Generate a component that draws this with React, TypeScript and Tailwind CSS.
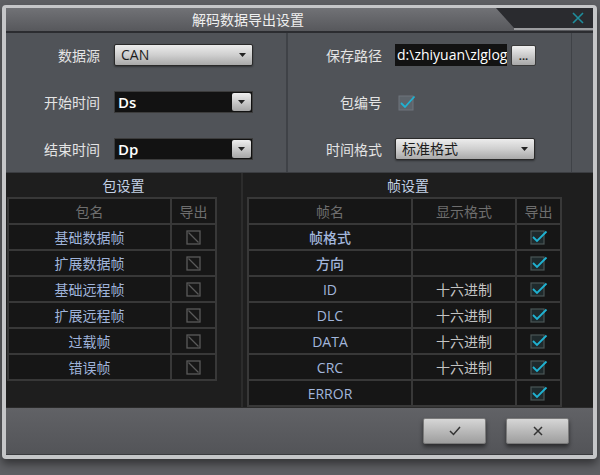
import React from "react";

// 下拉箭头
function Caret() {
  return (
    <svg width="7" height="4" viewBox="0 0 7 4">
      <polygon points="0,0 7,0 3.5,4" fill="#222" />
    </svg>
  );
}

function LightSelect({ value, width }: { value: string; width: string }) {
  return (
    <div
      className={`${width} h-[22px] flex items-center justify-between pl-[6px] pr-[6px] rounded-[2px] border border-[#2a2a2a] bg-gradient-to-b from-[#ececec] via-[#cfcfcf] to-[#a9a9a9] text-[#1c1c1c] text-[14px] shadow-[0_1px_2px_rgba(0,0,0,0.4)]`}
    >
      <span className="leading-none">{value}</span>
      <Caret />
    </div>
  );
}

function DarkSelect({ value }: { value: string }) {
  return (
    <div className="w-[139px] h-[22px] flex items-center justify-between pl-[3px] pr-[1px] border border-[#3c3c3c] bg-[#121212] text-white text-[15px] font-semibold">
      <span className="leading-none">{value}</span>
      <div className="w-[19px] h-[18px] flex items-center justify-center rounded-[2px] bg-gradient-to-b from-[#efefef] to-[#a6a6a6]">
        <Caret />
      </div>
    </div>
  );
}

function CheckOn() {
  return (
    <svg width="18" height="16" viewBox="0 0 18 16">
      <rect x="1" y="2" width="13" height="13" fill="#1f2a2c" stroke="#4a5656" strokeWidth="1.2" />
      <polyline points="3,8 7,12 16.5,2.5" fill="none" stroke="#1fb2d2" strokeWidth="1.8" />
    </svg>
  );
}

function CheckOff() {
  return (
    <svg width="15" height="15" viewBox="0 0 15 15">
      <rect x="1" y="1" width="13" height="13" fill="#171717" stroke="#5a5a5a" strokeWidth="1.3" />
      <line x1="2.5" y1="2.5" x2="12.5" y2="12.5" stroke="#5a5a5a" strokeWidth="1.3" />
    </svg>
  );
}

const packRows = ["基础数据帧", "扩展数据帧", "基础远程帧", "扩展远程帧", "过载帧", "错误帧"];

const frameRows = [
  { name: "帧格式", fmt: "" },
  { name: "方向", fmt: "" },
  { name: "ID", fmt: "十六进制" },
  { name: "DLC", fmt: "十六进制" },
  { name: "DATA", fmt: "十六进制" },
  { name: "CRC", fmt: "十六进制" },
  { name: "ERROR", fmt: "" },
];

const cell = "h-[24px] bg-[#161616] flex items-center justify-center text-[14px]";

export default function App() {
  return (
    <div className="w-[600px] h-[475px] overflow-hidden bg-[#5e5f63] pt-[5px] pl-[2px] font-['Open_Sans','Noto_Sans_CJK_SC',sans-serif]">
      <div className="w-[595px] h-[454px] flex flex-col rounded-[4px] border-x-[4px] border-t-[3px] border-b-[4px] border-[#c5c6c8] bg-[#505358] shadow-[0_5px_8px_rgba(0,0,0,0.45)]">
        {/* 标题栏 */}
        <div className="h-[23px] flex bg-gradient-to-b from-[#717276] to-[#57585c]">
          <div className="flex-1 flex items-center justify-center text-[14px] text-[#efefef] leading-none pr-[6px]">
            解码数据导出设置
          </div>
          <div className="w-[97px] flex flex-col">
            <div className="h-[20px] flex items-center justify-end pr-[9px] bg-[#2a2b2f] [clip-path:polygon(0_0,100%_0,100%_100%,18px_100%)]">
              <svg width="12" height="12" viewBox="0 0 12 12">
                <path d="M1 1 L11 11 M11 1 L1 11" stroke="#1f8d9c" strokeWidth="1.6" />
              </svg>
            </div>
            <div className="h-[2px] ml-[18px] bg-[#9c9da0]" />
          </div>
        </div>
        <div className="h-[2px] bg-[#2b2c30]" />

        {/* 上部设置 */}
        <div className="h-[139px] flex">
          <div className="w-[280px] pt-[11px] flex flex-col gap-[25px]">
            <div className="flex items-center h-[22px]">
              <span className="w-[94px] text-right text-[14px] text-[#e4e4e4]">数据源</span>
              <div className="ml-[14px]">
                <LightSelect value="CAN" width="w-[139px]" />
              </div>
            </div>
            <div className="flex items-center h-[22px]">
              <span className="w-[94px] text-right text-[14px] text-[#e4e4e4]">开始时间</span>
              <div className="ml-[14px]">
                <DarkSelect value="Ds" />
              </div>
            </div>
            <div className="flex items-center h-[22px]">
              <span className="w-[94px] text-right text-[14px] text-[#e4e4e4]">结束时间</span>
              <div className="ml-[14px]">
                <DarkSelect value="Dp" />
              </div>
            </div>
          </div>
          <div className="w-[2px] bg-[#3f4247]" />
          <div className="w-[283px] pt-[11px] flex flex-col gap-[25px]">
            <div className="flex items-center h-[22px]">
              <span className="w-[94px] text-right text-[14px] text-[#e4e4e4]">保存路径</span>
              <div className="ml-[13px] w-[112px] h-[22px] bg-[#121212] text-white text-[14px] leading-[22px] pl-[2px] overflow-hidden whitespace-nowrap">
                d:\zhiyuan\zlglog
              </div>
              <div className="ml-[4px] w-[25px] h-[21px] flex items-end justify-center pb-[4px] rounded-[2px] border border-[#3a3a3a] bg-gradient-to-b from-[#f0f0f0] to-[#a8a8a8] text-[#222] text-[11px] leading-none font-bold">
                ...
              </div>
            </div>
            <div className="flex items-center h-[22px]">
              <span className="w-[94px] text-right text-[14px] text-[#e4e4e4]">包编号</span>
              <div className="ml-[16px] flex items-center">
                <svg width="18" height="17" viewBox="0 0 18 17">
                  <rect x="1" y="2" width="14" height="14" fill="#5d646b" stroke="#6e757c" strokeWidth="1" />
                  <polyline points="3,9 7,13 16.5,2.5" fill="none" stroke="#1fb2d2" strokeWidth="1.8" />
                </svg>
              </div>
            </div>
            <div className="flex items-center h-[22px]">
              <span className="w-[94px] text-right text-[14px] text-[#e4e4e4]">时间格式</span>
              <div className="ml-[13px]">
                <LightSelect value="标准格式" width="w-[140px]" />
              </div>
            </div>
          </div>
          <div className="w-[1px] bg-[#3f4247]" />
          <div className="flex-1" />
        </div>

        {/* 下部表格 */}
        <div className="h-[235px] flex bg-[#1e1e1e] border-t border-[#3b3d41]">
          <div className="w-[235px] flex flex-col">
            <div className="h-[24px] flex items-center justify-center text-[14px] text-[#c3d1e6]">包设置</div>
            <div className="ml-[1px] w-fit grid grid-cols-[161px_43px] gap-[2px] p-[2px] bg-[#383838]">
              <div className={`${cell} text-[#6e6e6e]`}>包名</div>
              <div className={`${cell} text-[#6e6e6e]`}>导出</div>
              {packRows.map((r) => (
                <React.Fragment key={r}>
                  <div className={`${cell} text-[#9fb3da]`}>{r}</div>
                  <div className={cell}>
                    <CheckOff />
                  </div>
                </React.Fragment>
              ))}
            </div>
          </div>
          <div className="flex-1 flex flex-col border-l-2 border-[#2c2c2c]">
            <div className="h-[24px] flex items-center justify-center text-[14px] text-[#c3d1e6] pr-[20px]">帧设置</div>
            <div className="ml-[4px] w-fit grid grid-cols-[162px_102px_43px] gap-[2px] p-[2px] bg-[#383838]">
              <div className={`${cell} text-[#6e6e6e]`}>帧名</div>
              <div className={`${cell} text-[#6e6e6e]`}>显示格式</div>
              <div className={`${cell} text-[#6e6e6e]`}>导出</div>
              {frameRows.map((r) => (
                <React.Fragment key={r.name}>
                  <div className={`${cell} text-[#a2b6dc] font-medium`}>{r.name}</div>
                  <div className={`${cell} text-[#c4c4c4]`}>{r.fmt}</div>
                  <div className={cell}>
                    <CheckOn />
                  </div>
                </React.Fragment>
              ))}
            </div>
          </div>
        </div>

        {/* 底部按钮 */}
        <div className="flex-1 flex justify-end items-start gap-[20px] pt-[10px] pr-[24px] border-t border-[#2a2a2a] border-b border-b-[#3a3b3e] bg-gradient-to-b from-[#616266] to-[#535458]">
          <button className="w-[63px] h-[26px] flex items-center justify-center rounded-[2px] border border-[#7a7a7a] bg-gradient-to-b from-[#d6d6d6] to-[#9e9e9e] shadow-[0_3px_4px_rgba(0,0,0,0.5)]">
            <svg width="14" height="12" viewBox="0 0 14 12">
              <polyline points="2,6 5.5,9.5 12,2" fill="none" stroke="#333" strokeWidth="1.5" />
            </svg>
          </button>
          <button className="w-[63px] h-[26px] flex items-center justify-center rounded-[2px] border border-[#7a7a7a] bg-gradient-to-b from-[#d6d6d6] to-[#9e9e9e] shadow-[0_3px_4px_rgba(0,0,0,0.5)]">
            <svg width="12" height="12" viewBox="0 0 12 12">
              <path d="M2 2 L10 10 M10 2 L2 10" stroke="#333" strokeWidth="1.5" />
            </svg>
          </button>
        </div>
      </div>
    </div>
  );
}
